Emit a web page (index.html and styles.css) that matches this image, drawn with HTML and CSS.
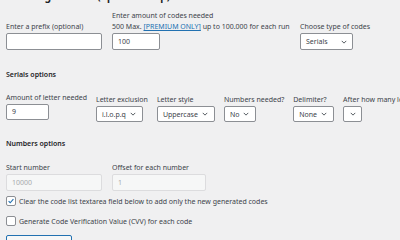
FILE: index.html
```html
<!DOCTYPE html>
<html lang="en">
<head>
    <meta charset="UTF-8">
    <title>Code generator</title>
    <link rel="stylesheet" href="styles.css">
</head>
<body>
    <div class="wrap">
        <h2>1. Code generator (optional step)</h2>

        <div class="row row-top">
            <div class="field w-prefix">
                <label>Enter a prefix (optional)</label>
                <div class="input"></div>
            </div>
            <div class="field w-amount">
                <label>Enter amount of codes needed<br>500 Max. <a href="#">[PREMIUM ONLY]</a> up to 100.000 for each run</label>
                <div class="input short">100</div>
            </div>
            <div class="field">
                <label>Choose type of codes</label>
                <div class="select w-type">Serials <svg class="chev" viewBox="0 0 8 5"><path d="M1 1l3 3 3-3"/></svg></div>
            </div>
        </div>

        <h3>Serials options</h3>
        <div class="row row-serial">
            <div class="field">
                <label>Amount of letter needed</label>
                <div class="input letters">9</div>
            </div>
            <div class="field sel">
                <label>Letter exclusion</label>
                <div class="select">i.l.o.p.q <svg class="chev" viewBox="0 0 8 5"><path d="M1 1l3 3 3-3"/></svg></div>
            </div>
            <div class="field sel">
                <label>Letter style</label>
                <div class="select">Uppercase <svg class="chev" viewBox="0 0 8 5"><path d="M1 1l3 3 3-3"/></svg></div>
            </div>
            <div class="field sel">
                <label>Numbers needed?</label>
                <div class="select">No <svg class="chev" viewBox="0 0 8 5"><path d="M1 1l3 3 3-3"/></svg></div>
            </div>
            <div class="field sel">
                <label>Delimiter?</label>
                <div class="select">None <svg class="chev" viewBox="0 0 8 5"><path d="M1 1l3 3 3-3"/></svg></div>
            </div>
            <div class="field sel">
                <label>After how many letters?</label>
                <div class="select empty"><svg class="chev" viewBox="0 0 8 5"><path d="M1 1l3 3 3-3"/></svg></div>
            </div>
        </div>

        <h3>Numbers options</h3>
        <div class="row row-numbers">
            <div class="field w-prefix">
                <label>Start number</label>
                <div class="input disabled">10000</div>
            </div>
            <div class="field w-offset">
                <label>Offset for each number</label>
                <div class="input disabled">1</div>
            </div>
        </div>

        <div class="check">
            <span class="box checked"><svg viewBox="0 0 10 10"><path d="M2 5.2l2 2 4-4.6"/></svg></span>
            Clear the code list textarea field below to add only the new generated codes
        </div>
        <div class="check">
            <span class="box"></span>
            Generate Code Verification Value (CVV) for each code
        </div>

        <button class="button">Generate codes</button>
    </div>
</body>
</html>
```

FILE: styles.css
```css
body {
    margin: 0;
    background-color: #f0f0f1;
    color: #3c434a;
    font-family: "Noto Sans", "Open Sans", sans-serif;
    font-size: 7px;
    overflow: hidden;
}
.wrap {
    padding: 0 6px;
}
h2 {
    font-size: 10px;
    font-weight: 700;
    color: #1d2327;
    margin: -10px 0 0;
    height: 12px;
    line-height: 12px;
}
h3 {
    font-size: 7px;
    font-weight: 600;
    color: #1d2327;
    margin: 0;
    line-height: 10px;
}
a {
    color: #2271b1;
}
.row {
    display: flex;
    align-items: flex-end;
}
.row-top {
    gap: 10px;
    margin-top: 8px;
    margin-bottom: 20px;
}
.row-serial {
    margin-top: 12px;
    margin-bottom: 19px;
}
.row-numbers {
    gap: 10px;
    margin-top: 13px;
    margin-bottom: 0;
}
.field {
    display: flex;
    flex-direction: column;
}
.field label {
    line-height: 11px;
    margin-bottom: 1px;
    white-space: nowrap;
}
.w-prefix {
    width: 96px;
}
.w-amount {
    width: 178px;
}
.w-offset {
    width: 94px;
}
.input {
    height: 17px;
    box-sizing: border-box;
    background: #fff;
    border: 1px solid #8c8f94;
    border-radius: 2px;
    padding: 0 5px;
    line-height: 15px;
}
.input.short {
    width: 48px;
}
.input.letters {
    width: 43px;
    height: 16px;
    line-height: 14px;
}
.input.disabled {
    background: #f6f7f7;
    border-color: #dcdcde;
    color: #a7aaad;
}
.row-serial .field {
    margin-right: 9px;
}
.row-serial .sel {
    position: relative;
    top: 2px;
}
.select {
    display: flex;
    align-items: center;
    gap: 4px;
    height: 16px;
    box-sizing: border-box;
    background: #fff;
    border: 1px solid #8c8f94;
    border-radius: 2px;
    padding: 0 6px 0 5px;
    align-self: flex-start;
}
.select.w-type {
    width: 53px;
    height: 17px;
    justify-content: space-between;
    padding-right: 5px;
}
.select.empty {
    width: 19px;
    justify-content: center;
    padding: 0;
}
.chev {
    width: 6px;
    height: 4px;
    fill: none;
    stroke: #50575e;
    stroke-width: 1.3;
}
.check {
    display: flex;
    align-items: center;
    gap: 3px;
    height: 20px;
}
.box {
    width: 10px;
    height: 10px;
    box-sizing: border-box;
    border: 1px solid #8c8f94;
    border-radius: 2px;
    background: #fff;
    display: flex;
}
.box svg {
    width: 8px;
    height: 8px;
    fill: none;
    stroke: #2271b1;
    stroke-width: 1.4;
}
.button {
    margin-top: 4px;
    font-family: inherit;
    font-size: 7px;
    color: #2271b1;
    background: #f6f7f7;
    border: 1px solid #2271b1;
    border-radius: 2px;
    height: 14px;
    padding: 0 6px;
}
```
